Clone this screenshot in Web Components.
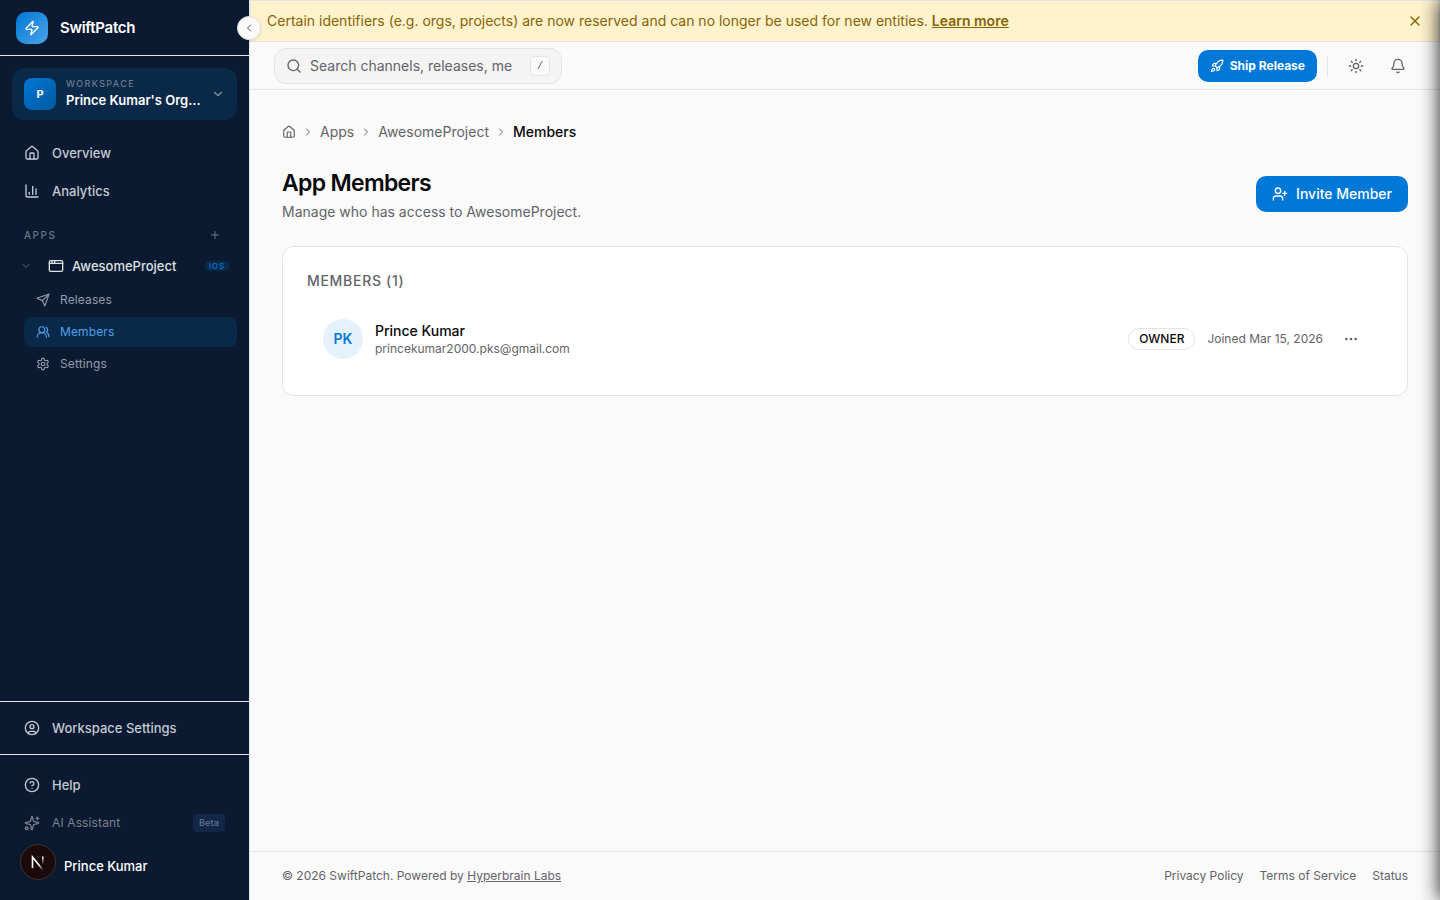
<!DOCTYPE html>
<html lang="en">
<head>
<meta charset="utf-8">
<meta name="viewport" content="width=device-width, initial-scale=1">
<title>Members - SwiftPatch</title>
<style>
:root{
    --blue: #0078d7;
    --navy: #0b1a30;
    --navy-active: #0a2848;
    --line: #e4e4e7;
    --muted: #636369;
    --page: #fafafa;
}
*{
    box-sizing: border-box;
}
body{
    margin: 0;
    font-family: Inter, "Liberation Sans", sans-serif;
    font-size: 14px;
    line-height: 20px;
    color: #09090b;
    background: var(--page);
}
</style>
</head>
<body>
<app-shell>
    <side-bar slot="side"></side-bar>
    <notice-banner slot="top" href="#">Certain identifiers (e.g. orgs, projects) are now reserved and can no longer be used for new entities.</notice-banner>
    <top-bar slot="top"></top-bar>
    <bread-crumbs current="Members">
        <a href="#">Apps</a>
        <a href="#">AwesomeProject</a>
    </bread-crumbs>
    <page-header>
        <span slot="title">App Members</span>
        <span slot="text">Manage who has access to AwesomeProject.</span>
        <blue-button slot="action" icon="userPlus">Invite Member</blue-button>
    </page-header>
    <member-card heading="MEMBERS (1)">
        <member-row initials="PK" name="Prince Kumar" email="princekumar2000.pks@gmail.com" role="OWNER" joined="Joined Mar 15, 2026"></member-row>
    </member-card>
    <page-footer slot="bottom"></page-footer>
</app-shell>
<dev-badge></dev-badge>

<script>
const icons = {
    zap: '<path d="M4 14a1 1 0 0 1-.78-1.63l9.9-10.2a.5.5 0 0 1 .86.46l-1.92 6.02A1 1 0 0 0 13 10h7a1 1 0 0 1 .78 1.63l-9.9 10.2a.5.5 0 0 1-.86-.46l1.92-6.02A1 1 0 0 0 11 14z"/>',
    house: '<path d="M15 21v-8a1 1 0 0 0-1-1h-4a1 1 0 0 0-1 1v8"/><path d="M3 10a2 2 0 0 1 .709-1.528l7-5.999a2 2 0 0 1 2.582 0l7 5.999A2 2 0 0 1 21 10v9a2 2 0 0 1-2 2H5a2 2 0 0 1-2-2z"/>',
    chart: '<path d="M3 3v16a2 2 0 0 0 2 2h16"/><path d="M18 17V9"/><path d="M13 17V5"/><path d="M8 17v-3"/>',
    down: '<path d="m6 9 6 6 6-6"/>',
    left: '<path d="m15 18-6-6 6-6"/>',
    right: '<path d="m9 18 6-6-6-6"/>',
    plus: '<path d="M5 12h14"/><path d="M12 5v14"/>',
    appWindow: '<rect x="2" y="4" width="20" height="16" rx="2"/><path d="M10 4v4"/><path d="M2 8h20"/><path d="M6 4v4"/>',
    send: '<path d="M14.536 21.686a.5.5 0 0 0 .937-.024l6.5-19a.496.496 0 0 0-.635-.635l-19 6.5a.5.5 0 0 0-.024.937l7.93 3.18a2 2 0 0 1 1.112 1.11z"/><path d="m21.854 2.147-10.94 10.939"/>',
    users: '<path d="M18 21a8 8 0 0 0-16 0"/><circle cx="10" cy="8" r="5"/><path d="M22 20c0-3.370-2-6.500-4-8a5 5 0 0 0-.45-8.300"/>',
    gear: '<path d="M12.220 2h-.44a2 2 0 0 0-2 2v.18a2 2 0 0 1-1 1.730l-.43.25a2 2 0 0 1-2 0l-.15-.08a2 2 0 0 0-2.730.730l-.22.38a2 2 0 0 0 .730 2.730l.15.1a2 2 0 0 1 1 1.720v.51a2 2 0 0 1-1 1.740l-.15.09a2 2 0 0 0-.730 2.730l.22.38a2 2 0 0 0 2.730.730l.15-.08a2 2 0 0 1 2 0l.43.25a2 2 0 0 1 1 1.730V20a2 2 0 0 0 2 2h.44a2 2 0 0 0 2-2v-.18a2 2 0 0 1 1-1.730l.43-.25a2 2 0 0 1 2 0l.15.08a2 2 0 0 0 2.730-.730l.22-.39a2 2 0 0 0-.730-2.730l-.15-.08a2 2 0 0 1-1-1.740v-.5a2 2 0 0 1 1-1.740l.15-.09a2 2 0 0 0 .730-2.730l-.22-.38a2 2 0 0 0-2.730-.730l-.15.08a2 2 0 0 1-2 0l-.43-.25a2 2 0 0 1-1-1.730V4a2 2 0 0 0-2-2z"/><circle cx="12" cy="12" r="3"/>',
    userCircle: '<circle cx="12" cy="12" r="10"/><circle cx="12" cy="10" r="3"/><path d="M7 20.662V19a2 2 0 0 1 2-2h6a2 2 0 0 1 2 2v1.662"/>',
    help: '<circle cx="12" cy="12" r="10"/><path d="M9.090 9a3 3 0 0 1 5.830 1c0 2-3 3-3 3"/><path d="M12 17h.01"/>',
    sparkles: '<path d="M9.937 15.500A2 2 0 0 0 8.500 14.063l-6.135-1.582a.5.5 0 0 1 0-.962L8.500 9.936A2 2 0 0 0 9.937 8.500l1.582-6.135a.5.5 0 0 1 .963 0L14.063 8.500A2 2 0 0 0 15.500 9.937l6.135 1.581a.5.5 0 0 1 0 .964L15.500 14.063a2 2 0 0 0-1.437 1.437l-1.582 6.135a.5.5 0 0 1-.963 0z"/><path d="M20 3v4"/><path d="M22 5h-4"/><circle cx="4" cy="20" r="2"/>',
    search: '<circle cx="11" cy="11" r="8"/><path d="m21 21-4.300-4.300"/>',
    rocket: '<path d="M4.500 16.500c-1.500 1.260-2 5-2 5s3.740-.5 5-2c.710-.840.700-2.130-.090-2.910a2.180 2.180 0 0 0-2.910-.090z"/><path d="m12 15-3-3a22 22 0 0 1 2-3.950A12.880 12.880 0 0 1 22 2c0 2.720-.780 7.500-6 11a22.350 22.350 0 0 1-4 2z"/><path d="M9 12H4s.550-3.030 2-4c1.620-1.080 5 0 5 0"/><path d="M12 15v5s3.030-.550 4-2c1.080-1.620 0-5 0-5"/>',
    sun: '<circle cx="12" cy="12" r="4"/><path d="M12 2v2"/><path d="M12 20v2"/><path d="m4.930 4.930 1.410 1.410"/><path d="m17.660 17.660 1.410 1.410"/><path d="M2 12h2"/><path d="M20 12h2"/><path d="m6.340 17.660-1.410 1.410"/><path d="m19.070 4.930-1.410 1.410"/>',
    bell: '<path d="M10.268 21a2 2 0 0 0 3.464 0"/><path d="M3.262 15.326A1 1 0 0 0 4 17h16a1 1 0 0 0 .740-1.673C19.410 13.956 18 12.499 18 8A6 6 0 0 0 6 8c0 4.499-1.411 5.956-2.738 7.326"/>',
    close: '<path d="M18 6 6 18"/><path d="m6 6 12 12"/>',
    userPlus: '<path d="M16 21v-2a4 4 0 0 0-4-4H6a4 4 0 0 0-4 4v2"/><circle cx="9" cy="7" r="4"/><path d="M19 8v6"/><path d="M22 11h-6"/>',
    dots: '<circle cx="12" cy="12" r="1"/><circle cx="19" cy="12" r="1"/><circle cx="5" cy="12" r="1"/>'
}

// shared by every shadow root
const base = `
*{
    box-sizing: border-box;
}
button, input{
    font: inherit;
    letter-spacing: inherit;
    color: inherit;
    margin: 0;
    padding: 0;
    border: 0;
    background: none;
}
button{
    cursor: pointer;
}
a{
    color: inherit;
    text-decoration: none;
}
`

class BaseElement extends HTMLElement{
    constructor() {
        super()
        this._shadowRoot = this.attachShadow({mode:'open'})
    }
    connectedCallback() {
        this._shadowRoot.innerHTML = `<style>${base}${this.css()}</style>${this.html()}`
    }
    attr(name) {
        return this.getAttribute(name) || ''
    }
}

class AppIcon extends BaseElement{
    css() {
        const size = this.attr('size') || 16
        return `
        :host{
            display: block;
            flex: none;
            width: ${size}px;
            height: ${size}px;
        }
        svg{
            display: block;
            width: 100%;
            height: 100%;
            fill: none;
            stroke: currentColor;
            stroke-width: 2;
            stroke-linecap: round;
            stroke-linejoin: round;
        }
        `
    }
    html() {
        return `<svg viewBox="0 0 24 24" aria-hidden="true">${icons[this.attr('name')]}</svg>`
    }
}
window.customElements.define('app-icon', AppIcon)

class AppShell extends BaseElement{
    css() {
        return `
        :host{
            display: flex;
            min-height: 100vh;
        }
        .column{
            flex: 1;
            min-width: 0;
            display: flex;
            flex-direction: column;
        }
        main{
            flex: 1;
            padding: 32px;
            display: flex;
            flex-direction: column;
            gap: 24px;
        }
        /* shade of the drawer that waits past the right edge */
        .edge{
            position: fixed;
            top: 0;
            right: 0;
            bottom: 0;
            width: 24px;
            pointer-events: none;
            overflow: hidden;
        }
        .edge::after{
            content: "";
            position: absolute;
            top: 0;
            bottom: 0;
            left: 100%;
            width: 24px;
            box-shadow: 0 0 20px rgba(0,0,0,.9);
        }
        `
    }
    html() {
        return `
        <slot name="side"></slot>
        <div class="column">
            <slot name="top"></slot>
            <main><slot></slot></main>
            <slot name="bottom"></slot>
        </div>
        <div class="edge"></div>
        `
    }
}
window.customElements.define('app-shell', AppShell)

class NavItem extends BaseElement{
    css() {
        return `
        :host{
            display: block;
            font-size: 13px;
            font-weight: 500;
            color: #c4cad3;
        }
        a{
            display: flex;
            align-items: center;
            gap: 12px;
            height: 36px;
            padding: 0 12px;
            border-radius: 8px;
        }
        .label{
            flex: 1;
        }
        :host([sub]){
            font-size: 12px;
            font-weight: 400;
            letter-spacing: .01em;
            color: #929ba8;
        }
        :host([sub]) a{
            gap: 10px;
            height: 30px;
        }
        :host([active]){
            color: #4ba3e8;
        }
        :host([active]) a{
            background: var(--navy-active);
        }
        :host([dim]){
            font-size: 12px;
            font-weight: 400;
            letter-spacing: .01em;
            color: #79828f;
        }
        `
    }
    html() {
        const size = this.hasAttribute('sub') ? 14 : 16
        return `
        <a href="#">
            <app-icon name="${this.attr('icon')}" size="${size}"></app-icon>
            <span class="label"><slot></slot></span>
            <slot name="tag"></slot>
        </a>
        `
    }
}
window.customElements.define('nav-item', NavItem)

class SideBar extends BaseElement{
    css() {
        return `
        :host{
            position: sticky;
            top: 0;
            display: flex;
            flex-direction: column;
            flex: none;
            width: 250px;
            height: 100vh;
            color: #fff;
            background: var(--navy);
            border-right: 1px solid var(--line);
        }
        .brand{
            display: flex;
            align-items: center;
            gap: 12px;
            height: 56px;
            padding: 0 16px;
            border-bottom: 1px solid var(--line);
            font-size: 15px;
            font-weight: 600;
            letter-spacing: -.02em;
        }
        .logo, .letter{
            display: grid;
            place-items: center;
            flex: none;
            width: 32px;
            height: 32px;
        }
        .logo{
            border-radius: 10px;
            background: linear-gradient(135deg, #0078d7, #4ba3e8);
        }
        .toggle{
            position: absolute;
            top: 16px;
            right: -12px;
            z-index: 2;
            display: grid;
            place-items: center;
            width: 24px;
            height: 24px;
            border: 1px solid var(--line);
            border-radius: 50%;
            color: #52525b;
            background: var(--page);
            box-shadow: 0 1px 3px rgba(0,0,0,.12);
        }
        .workspace{
            display: flex;
            align-items: center;
            gap: 10px;
            height: 52px;
            margin: 12px 12px 15px;
            padding: 0 12px;
            border-radius: 12px;
            background: var(--navy-active);
            text-align: left;
        }
        .letter{
            border-radius: 8px;
            font-size: 11px;
            font-weight: 700;
            background: linear-gradient(135deg, #0078d7, #005a9e);
        }
        .names{
            flex: 1;
            min-width: 0;
            display: grid;
            padding-bottom: 4px;
            line-height: 16px;
            white-space: nowrap;
        }
        .names small{
            font-size: 9px;
            font-weight: 500;
            letter-spacing: .15em;
            color: #6c7b8f;
        }
        .names b{
            font-size: 13px;
            font-weight: 600;
        }
        .workspace app-icon{
            color: #8592a3;
        }
        nav, .section{
            display: flex;
            flex-direction: column;
            gap: 2px;
            padding: 0 12px;
        }
        nav{
            flex: 1;
        }
        .apps, .project{
            display: flex;
            align-items: center;
        }
        .apps{
            height: 24px;
            margin-top: 12px;
            padding: 0 16px 0 12px;
            font-size: 10px;
            font-weight: 500;
            letter-spacing: .15em;
            color: #6b7686;
        }
        .apps span{
            flex: 1;
        }
        .project{
            height: 34px;
            gap: 8px;
            padding: 0 8px;
            color: #dde1e6;
            font-size: 13px;
            font-weight: 500;
        }
        .project button{
            padding-right: 8px;
            color: #5b6675;
        }
        .project a{
            flex: 1;
            display: flex;
            align-items: center;
            gap: 8px;
        }
        .ios{
            padding: 0 4px;
            border-radius: 4px;
            font-size: 8px;
            font-weight: 500;
            line-height: 10px;
            letter-spacing: .1em;
            color: var(--blue);
            background: var(--navy-active);
        }
        .sub{
            display: flex;
            flex-direction: column;
            gap: 2px;
            padding-left: 12px;
        }
        .section{
            padding: 8px 12px;
            border-top: 1px solid var(--line);
        }
        .last{
            padding: 12px;
        }
        .beta{
            padding: 0 6px;
            border-radius: 4px;
            font-size: 9px;
            font-weight: 500;
            line-height: 18px;
            color: #657794;
            background: #122647;
        }
        .user{
            display: flex;
            align-items: center;
            gap: 8px;
            height: 45px;
            padding: 0 12px;
            font-size: 13px;
            font-weight: 500;
        }
        .user i{
            width: 32px;
            height: 32px;
            border-radius: 50%;
        }
        `
    }
    html() {
        return `
        <div class="brand">
            <span class="logo"><app-icon name="zap"></app-icon></span>
            <span>SwiftPatch</span>
        </div>
        <button class="toggle" aria-label="Collapse sidebar"><app-icon name="left" size="12"></app-icon></button>
        <button class="workspace">
            <span class="letter">P</span>
            <span class="names"><small>WORKSPACE</small><b>Prince Kumar's Org...</b></span>
            <app-icon name="down" size="14"></app-icon>
        </button>
        <nav>
            <nav-item icon="house">Overview</nav-item>
            <nav-item icon="chart">Analytics</nav-item>
            <div class="apps">
                <span>APPS</span>
                <button aria-label="Add app"><app-icon name="plus" size="12"></app-icon></button>
            </div>
            <div class="project">
                <button aria-label="Toggle app"><app-icon name="down" size="12"></app-icon></button>
                <a href="#"><app-icon name="appWindow"></app-icon>AwesomeProject</a>
                <span class="ios">IOS</span>
            </div>
            <div class="sub">
                <nav-item sub icon="send">Releases</nav-item>
                <nav-item sub active icon="users">Members</nav-item>
                <nav-item sub icon="gear">Settings</nav-item>
            </div>
        </nav>
        <div class="section">
            <nav-item icon="userCircle">Workspace Settings</nav-item>
        </div>
        <div class="section last">
            <nav-item icon="help">Help</nav-item>
            <nav-item dim icon="sparkles">AI Assistant<span class="beta" slot="tag">Beta</span></nav-item>
            <div class="user"><i></i><span>Prince Kumar</span></div>
        </div>
        `
    }
}
window.customElements.define('side-bar', SideBar)

class NoticeBanner extends BaseElement{
    css() {
        return `
        :host{
            display: flex;
            align-items: center;
            gap: 16px;
            min-height: 42px;
            padding: 0 16px;
            border: 1px solid var(--line);
            color: #856404;
            background: #fff2cd;
        }
        p{
            flex: 1;
            margin: 0;
        }
        a{
            font-weight: 600;
            text-decoration: underline;
        }
        `
    }
    html() {
        return `
        <p><slot></slot> <a href="${this.attr('href')}">Learn more</a></p>
        <button aria-label="Dismiss"><app-icon name="close"></app-icon></button>
        `
    }
}
window.customElements.define('notice-banner', NoticeBanner)

class BlueButton extends BaseElement{
    css() {
        return `
        :host{
            display: block;
            flex: none;
            font-size: 14px;
            font-weight: 500;
        }
        button{
            display: flex;
            align-items: center;
            gap: 8px;
            height: 36px;
            padding: 0 16px;
            border-radius: 10px;
            color: #fff;
            background: var(--blue);
        }
        :host([small]){
            font-size: 12px;
            font-weight: 700;
        }
        :host([small]) button{
            gap: 6px;
            height: 32px;
            padding: 0 12px;
        }
        `
    }
    html() {
        const size = this.hasAttribute('small') ? 14 : 16
        return `<button><app-icon name="${this.attr('icon')}" size="${size}"></app-icon><slot></slot></button>`
    }
}
window.customElements.define('blue-button', BlueButton)

class TopBar extends BaseElement{
    css() {
        return `
        :host{
            display: flex;
            align-items: center;
            justify-content: space-between;
            height: 48px;
            padding: 0 24px;
            border-bottom: 1px solid var(--line);
            color: var(--muted);
        }
        .search{
            display: flex;
            align-items: center;
            gap: 8px;
            width: 288px;
            height: 36px;
            padding: 0 11px;
            border: 1px solid var(--line);
            border-radius: 12px;
            background: #f4f4f5;
        }
        input{
            flex: 1;
            min-width: 0;
            outline: none;
        }
        input::placeholder{
            color: var(--muted);
            opacity: 1;
        }
        kbd{
            width: 20px;
            border: 1px solid var(--line);
            border-radius: 4px;
            font: 11px/18px "Liberation Mono", monospace;
            text-align: center;
            background: var(--page);
        }
        .actions{
            display: flex;
            align-items: center;
            gap: 6px;
        }
        .actions hr{
            width: 1px;
            height: 20px;
            margin: 0 4px;
            border: 0;
            background: var(--line);
        }
        .actions button{
            display: grid;
            place-items: center;
            width: 36px;
            height: 36px;
        }
        `
    }
    html() {
        return `
        <label class="search">
            <app-icon name="search"></app-icon>
            <input type="text" aria-label="Search" placeholder="Search channels, releases, me">
            <kbd>/</kbd>
        </label>
        <div class="actions">
            <blue-button small icon="rocket">Ship Release</blue-button>
            <hr>
            <button aria-label="Theme"><app-icon name="sun"></app-icon></button>
            <button aria-label="Notifications"><app-icon name="bell"></app-icon></button>
        </div>
        `
    }
}
window.customElements.define('top-bar', TopBar)

class BreadCrumbs extends BaseElement{
    css() {
        return `
        :host{
            display: block;
            color: var(--muted);
        }
        nav{
            display: flex;
            align-items: center;
            gap: 6px;
        }
        .current{
            font-weight: 500;
            color: #09090b;
        }
        `
    }
    html() {
        const sep = '<app-icon name="right" size="12"></app-icon>'
        const links = [...this.querySelectorAll('a')].map(a => sep + a.outerHTML).join('')
        return `
        <nav aria-label="Breadcrumb">
            <a href="#" aria-label="Home"><app-icon name="house" size="14"></app-icon></a>
            ${links}
            ${sep}
            <span class="current">${this.attr('current')}</span>
        </nav>
        `
    }
}
window.customElements.define('bread-crumbs', BreadCrumbs)

class PageHeader extends BaseElement{
    css() {
        return `
        :host{
            display: flex;
            align-items: center;
            justify-content: space-between;
        }
        h1{
            margin: 0 0 2px;
            font-size: 23px;
            font-weight: 600;
            line-height: 34px;
            letter-spacing: -.03em;
        }
        p{
            margin: 0;
            color: var(--muted);
        }
        `
    }
    html() {
        return `
        <div>
            <h1><slot name="title"></slot></h1>
            <p><slot name="text"></slot></p>
        </div>
        <slot name="action"></slot>
        `
    }
}
window.customElements.define('page-header', PageHeader)

class MemberCard extends BaseElement{
    css() {
        return `
        :host{
            display: block;
            padding: 24px;
            border: 1px solid var(--line);
            border-radius: 12px;
            background: #fff;
        }
        h2{
            margin: 0 0 16px;
            font-size: 14px;
            font-weight: 500;
            line-height: 20px;
            letter-spacing: .05em;
            color: var(--muted);
        }
        `
    }
    html() {
        return `<h2>${this.attr('heading')}</h2><slot></slot>`
    }
}
window.customElements.define('member-card', MemberCard)

class MemberRow extends BaseElement{
    css() {
        return `
        :host{
            display: flex;
            align-items: center;
            gap: 12px;
            padding: 12px 16px;
            font-size: 12px;
            line-height: 16px;
            color: var(--muted);
        }
        .avatar{
            display: grid;
            place-items: center;
            width: 40px;
            height: 40px;
            border-radius: 50%;
            font-size: 14px;
            font-weight: 600;
            color: var(--blue);
            background: #e5f1fb;
        }
        .who{
            flex: 1;
        }
        .who b{
            display: block;
            font-size: 14px;
            font-weight: 500;
            line-height: 20px;
            color: #09090b;
        }
        .role{
            padding: 2px 10px;
            border: 1px solid var(--line);
            border-radius: 11px;
            font-weight: 500;
            color: #09090b;
        }
        button{
            display: grid;
            place-items: center;
            width: 32px;
            height: 32px;
        }
        `
    }
    html() {
        return `
        <span class="avatar">${this.attr('initials')}</span>
        <div class="who"><b>${this.attr('name')}</b>${this.attr('email')}</div>
        <span class="role">${this.attr('role')}</span>
        <span>${this.attr('joined')}</span>
        <button aria-label="Member actions"><app-icon name="dots"></app-icon></button>
        `
    }
}
window.customElements.define('member-row', MemberRow)

class PageFooter extends BaseElement{
    css() {
        return `
        :host{
            display: block;
            border-top: 1px solid var(--line);
            font-size: 12px;
            line-height: 16px;
            color: var(--muted);
        }
        footer{
            display: flex;
            justify-content: space-between;
            padding: 16px 32px;
        }
        p{
            margin: 0;
        }
        p a{
            text-decoration: underline;
        }
        .links{
            display: flex;
            gap: 16px;
        }
        `
    }
    html() {
        return `
        <footer>
            <p>© 2026 SwiftPatch. Powered by <a href="#">Hyperbrain Labs</a></p>
            <div class="links">
                <a href="#">Privacy Policy</a>
                <a href="#">Terms of Service</a>
                <a href="#">Status</a>
            </div>
        </footer>
        `
    }
}
window.customElements.define('page-footer', PageFooter)

// floating round button in the lower left corner
class DevBadge extends BaseElement{
    css() {
        return `
        :host{
            position: fixed;
            left: 20px;
            bottom: 20px;
            z-index: 3;
        }
        button{
            display: block;
            width: 36px;
            height: 36px;
            border: 1px solid #43302f;
            border-radius: 50%;
            background: #1b0a0c;
            box-shadow: 0 16px 32px -8px rgba(0,0,0,.24);
        }
        svg{
            display: block;
            width: 34px;
            height: 34px;
            fill: none;
        }
        `
    }
    html() {
        return `
        <button aria-label="Dev tools">
            <svg viewBox="0 0 34 34">
                <defs>
                    <linearGradient id="a" x1="0" y1="0" x2="1" y2="1">
                        <stop offset=".6" stop-color="#fff"/>
                        <stop offset="1" stop-color="#fff" stop-opacity="0"/>
                    </linearGradient>
                    <linearGradient id="b" x1="0" y1="0" x2="0" y2="1">
                        <stop offset="0" stop-color="#fff"/>
                        <stop offset="1" stop-color="#fff" stop-opacity="0"/>
                    </linearGradient>
                </defs>
                <path d="M11.500 23V12l10.500 13" stroke="url(#a)" stroke-width="1.600"/>
                <rect x="21" y="11.500" width="1.600" height="8" fill="url(#b)"/>
            </svg>
        </button>
        `
    }
}
window.customElements.define('dev-badge', DevBadge)
</script>
</body>
</html>
